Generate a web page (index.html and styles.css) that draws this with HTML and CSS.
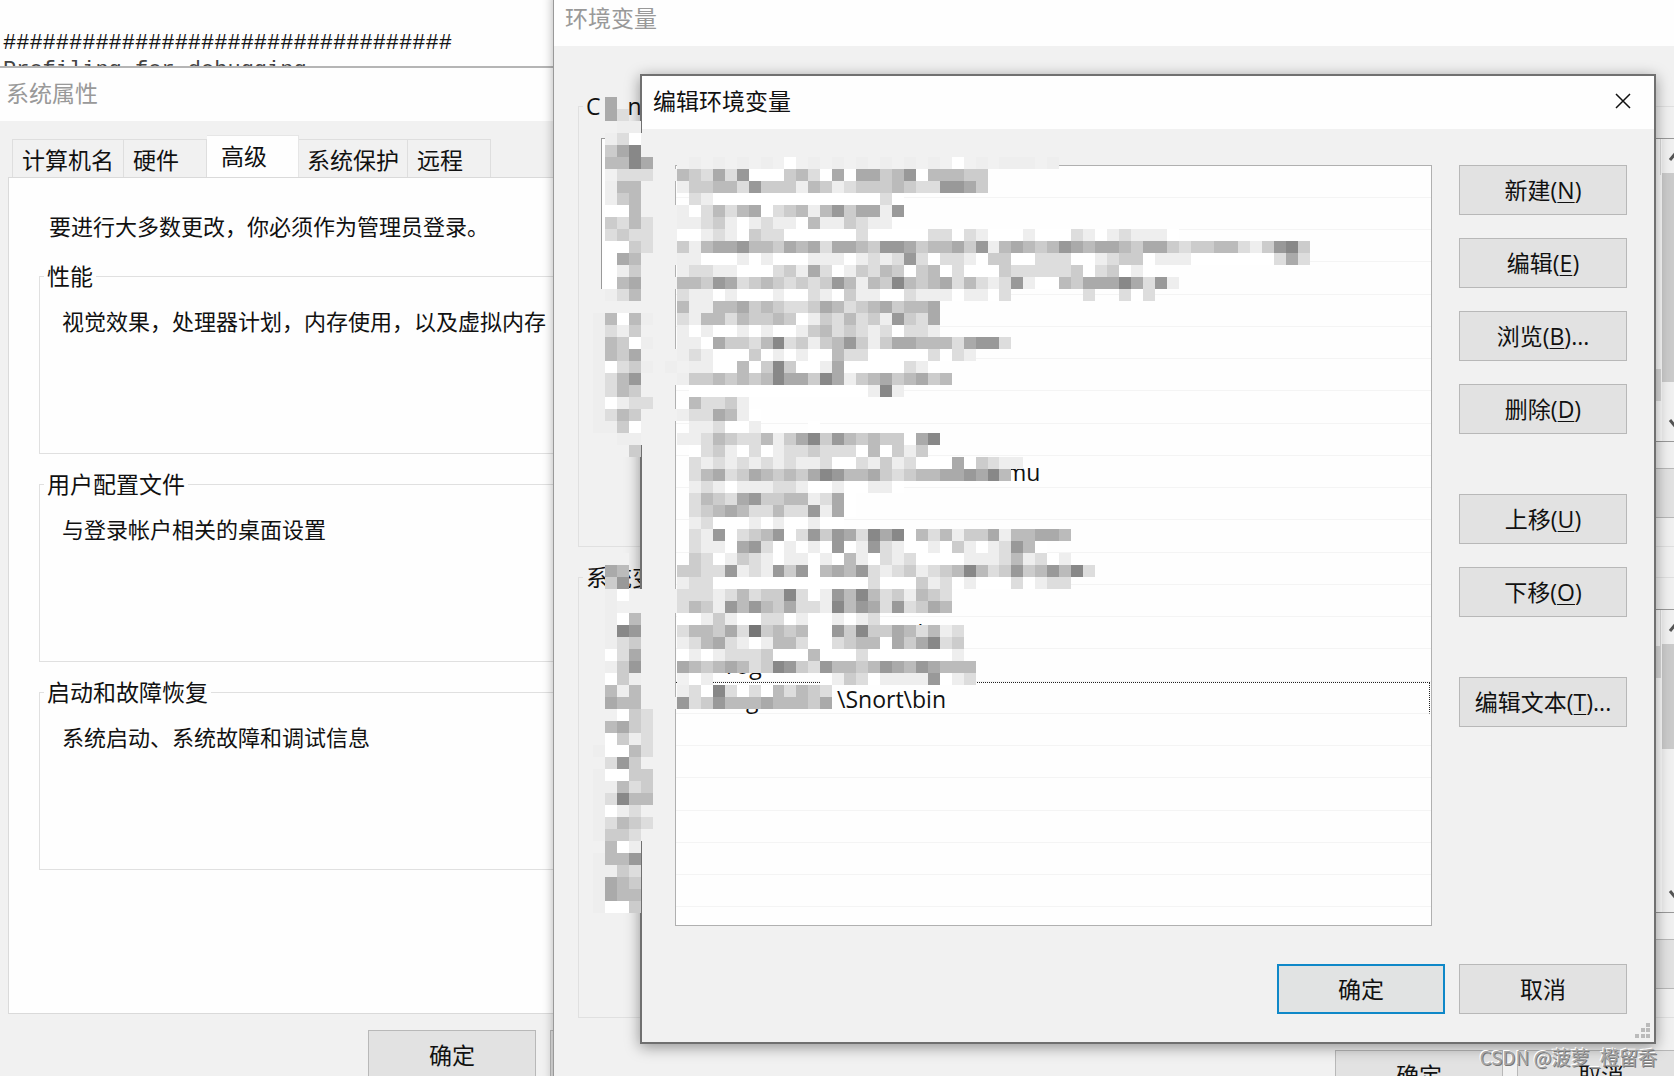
FILE: index.html
```html
<!DOCTYPE html>
<html lang="zh-CN">
<head>
    <meta charset="UTF-8">
    <meta name="viewport" content="width=device-width, initial-scale=1.0">
    <title>编辑环境变量</title>
    <link rel="stylesheet" href="styles.css">
</head>
<body>
    <main class="desktop">
        <!-- Terminal -->
        <pre class="console">##################################
<span>Profiling for debugging</span></pre>

        <!-- 系统属性 -->
        <section class="window system">
            <header class="title-bar inactive">系统属性</header>
            <div class="tabs" role="tablist">
                <button class="tab" role="tab">计算机名</button>
                <button class="tab" role="tab">硬件</button>
                <button class="tab active" role="tab" aria-selected="true">高级</button>
                <button class="tab" role="tab">系统保护</button>
                <button class="tab" role="tab">远程</button>
            </div>
            <div class="panel">
                <p class="notice">要进行大多数更改，你必须作为管理员登录。</p>
                <fieldset>
                    <legend>性能</legend>
                    <p>视觉效果，处理器计划，内存使用，以及虚拟内存</p>
                </fieldset>
                <fieldset>
                    <legend>用户配置文件</legend>
                    <p>与登录帐户相关的桌面设置</p>
                </fieldset>
                <fieldset>
                    <legend>启动和故障恢复</legend>
                    <p>系统启动、系统故障和调试信息</p>
                </fieldset>
            </div>
            <footer class="system-footer">
                <button class="btn">确定</button>
                <button class="btn" aria-label="取消"></button>
            </footer>
        </section>

        <!-- 环境变量 -->
        <section class="window variables">
            <header class="title-bar inactive">环境变量</header>
            <div class="variables-body">
                <fieldset>
                    <legend>C<span class="user-end">ng</span></legend>
                    <div class="var-list">
                        <div class="var-rows"><span class="header-cell"></span><span class="selected-row tall"></span></div>
                        <div class="scrollbar">
                            <svg viewBox="0 0 26 34"><path d="M8 21l5-6 5 6"/></svg>
                            <span class="thumb long"></span>
                            <svg viewBox="0 0 26 34"><path d="M8 13l5 6 5-6"/></svg>
                        </div>
                    </div>
                    <div class="var-actions"><button class="btn" aria-label="删除"></button></div>
                </fieldset>
                <fieldset>
                    <legend>系统变量</legend>
                    <div class="var-list">
                        <div class="var-rows"><span class="header-cell"></span><span class="selected-row"></span></div>
                        <div class="scrollbar">
                            <svg viewBox="0 0 26 34"><path d="M8 21l5-6 5 6"/></svg>
                            <span class="thumb"></span>
                            <svg viewBox="0 0 26 34"><path d="M8 13l5 6 5-6"/></svg>
                        </div>
                    </div>
                    <div class="var-actions"><button class="btn" aria-label="删除"></button></div>
                </fieldset>
                <footer class="variables-footer">
                    <button class="btn">确定</button>
                    <button class="btn">取消</button>
                </footer>
            </div>
        </section>

        <!-- 编辑环境变量 -->
        <section class="window editor">
            <header class="title-bar">
                <span>编辑环境变量</span>
                <button class="close" aria-label="关闭">
                    <svg viewBox="0 0 16 16"><path d="M1 1l14 14M15 1L1 15"/></svg>
                </button>
            </header>
            <div class="editor-body">
                <ul class="paths">
                    <li></li><li></li><li></li><li></li>
                    <li></li><li></li><li></li><li></li>
                    <li></li>
                    <li><span class="to-name">mu</span></li>
                    <li></li><li></li><li></li><li></li>
                    <li><span class="to-bin">%\bin</span></li>
                    <li><span class="to-folder">rog</span></li>
                    <li class="focused"><span class="to-g">g</span><span class="to-snort">\Snort\bin</span></li>
                    <li></li><li></li><li></li><li></li><li></li><li></li>
                </ul>
                <div class="actions">
                    <button class="btn">新建(<u>N</u>)</button>
                    <button class="btn">编辑(<u>E</u>)</button>
                    <button class="btn">浏览(<u>B</u>)...</button>
                    <button class="btn">删除(<u>D</u>)</button>
                    <button class="btn spaced">上移(<u>U</u>)</button>
                    <button class="btn">下移(<u>O</u>)</button>
                    <button class="btn spaced">编辑文本(<u>T</u>)...</button>
                </div>
            </div>
            <footer class="editor-footer">
                <button class="btn default">确定</button>
                <button class="btn">取消</button>
            </footer>
            <svg class="grip" viewBox="0 0 15 15">
                <path d="M11 0h4v4h-4zM6 5h4v4H6zM11 5h4v4h-4zM0 11h4v4H0zM6 11h4v4H6zM11 11h4v4h-4z"/>
            </svg>
        </section>

        <svg class="mosaic mosaic-names" id="mosaic-names" preserveAspectRatio="none"></svg>
        <svg class="mosaic mosaic-paths" id="mosaic-paths" preserveAspectRatio="none"></svg>

        <div class="watermark">CSDN @菠萝_橙留香</div>
    </main>
    <script src="script.js"></script>
</body>
</html>
```
FILE: styles.css
```css
* {
    box-sizing: border-box;
}

body {
    margin: 0;
    font-family: "Open Sans", "Noto Sans CJK SC", sans-serif;
    font-size: 23px;
    line-height: 30px;
    color: #111;
}

p {
    margin: 0;
}

button {
    font: inherit;
    color: inherit;
}

.desktop {
    position: relative;
    height: 100vh;
    overflow: hidden;
    background: #fefefe;
}

.console {
    margin: 0;
    padding: 30px 3px;
    font: 22px/27px "Liberation Mono", monospace;
}

.console span {
    color: #444;
}

/* Windows */
.window {
    position: absolute;
    display: flex;
    flex-direction: column;
    background: #f1f1f1;
}

.title-bar {
    display: flex;
    align-items: center;
    justify-content: space-between;
    flex: none;
    height: 53px;
    padding: 0 22px 4px 11px;
    background: #fefefe;
}

.title-bar.inactive {
    color: #999;
}

.btn {
    flex: none;
    width: 168px;
    height: 50px;
    padding: 0;
    background: #e2e2e2;
    border: 1px solid #b8b8b8;
    white-space: nowrap;
}

.btn.default {
    background: #e1e3e3;
    border: 2px solid #0f88c8;
}

u {
    text-decoration-thickness: 1px;
    text-underline-offset: 3px;
}

fieldset {
    margin: 0;
    padding: 0;
    border: 1px solid #e0e0e0;
    min-width: 0;
}

legend {
    margin-left: 4px;
    padding: 0 3px;
}

/* System properties */
.system {
    top: 66px;
    left: 0;
    bottom: -20px;
    width: 760px;
    border-top: 2px solid #b5b5b5;
}

.system .title-bar {
    padding-left: 6px;
}

.tabs {
    display: flex;
    align-items: flex-end;
    height: 56px;
    padding-left: 12px;
}

.tab {
    height: 38px;
    padding: 3px 9px 0;
    background: #f1f1f1;
    border: 1px solid #dedede;
    border-bottom: none;
    border-left: none;
    text-align: left;
}

.tab:first-child {
    border-left: 1px solid #dedede;
}

.tab:nth-child(2),
.tab:nth-child(5) {
    min-width: 83px;
}

.tab:nth-child(4) {
    padding: 3px 8px 0;
}

.tab.active {
    height: 42px;
    min-width: 92px;
    padding: 0 14px 2px;
    background: #fefefe;
    border-color: #e6e6e6;
}

.panel {
    height: 837px;
    margin-left: 8px;
    padding: 33px 30px 0;
    background: #fefefe;
    border: 1px solid #dadada;
}

.panel p {
    font-size: 22px;
}

.panel fieldset {
    height: 193px;
    margin-bottom: 15px;
}

.panel .notice {
    margin-bottom: 20px;
    padding-left: 10px;
}

.panel fieldset p {
    padding: 15px 22px;
    white-space: nowrap;
}

.system-footer {
    display: flex;
    gap: 14px;
    padding: 16px 0 0 368px;
}

/* Environment variables */
.variables {
    top: -7px;
    left: 553px;
    right: -62px;
    bottom: -60px;
    border-left: 1px solid #999;
    box-shadow: 0 0 10px rgba(0, 0, 0, 0.3);
}

.variables-body {
    padding: 45px 24px 0;
}

.variables fieldset {
    height: 456px;
    margin-bottom: 15px;
}

.user-end {
    padding-left: 27px;
}

.var-list {
    display: flex;
    height: 304px;
    margin: 17px 22px 0;
    background: #fefefe;
    border: 1px solid #999;
}

.var-rows {
    flex: 1;
    padding-right: 1px;
}

.header-cell {
    display: block;
    height: 36px;
    border-right: 1px solid #ddd;
}

.selected-row {
    display: block;
    height: 32px;
    background: #dcdcdc;
}

.selected-row.tall {
    margin-top: 194px;
}

.scrollbar {
    display: flex;
    flex-direction: column;
    justify-content: space-between;
    width: 26px;
    background: #f1f1f1;
}

.scrollbar svg {
    flex: none;
    width: 26px;
    height: 34px;
    fill: none;
    stroke: #555;
    stroke-width: 3;
}

.thumb {
    height: 105px;
    margin-bottom: auto;
    background: #cbcbcb;
}

.thumb.long {
    height: 209px;
}

.var-actions {
    display: flex;
    justify-content: flex-end;
    padding: 26px 22px 0;
}

.variables-footer {
    display: flex;
    justify-content: flex-end;
    gap: 14px;
    padding: 17px 27px 0 0;
}

/* Edit dialog */
.editor {
    top: 74px;
    left: 640px;
    right: 18px;
    bottom: 32px;
    border: 2px solid #707070;
    box-shadow: 0 3px 14px rgba(0, 0, 0, 0.4);
}

.close {
    width: 18px;
    height: 18px;
    padding: 1px;
    background: none;
    border: none;
}

.close svg {
    display: block;
    fill: none;
    stroke: #111;
    stroke-width: 1.5;
}

.editor-body {
    display: flex;
    gap: 27px;
    flex: 1;
    min-height: 0;
    padding: 36px 27px 0 33px;
}

.paths {
    flex: 1;
    margin: 0;
    padding: 0;
    overflow: hidden;
    list-style: none;
    background: #fefefe;
    border: 1px solid #b0b0b0;
}

.paths li {
    display: flex;
    height: 32px;
    line-height: 32px;
    border-bottom: 1px solid #f4f4f4;
}

.paths li:nth-child(4n) {
    height: 33px;
}

.paths .focused {
    margin-right: 1px;
    border-top: 1px dotted #222;
    border-right: 1px dotted #222;
}

.to-name {
    padding-left: 329px;
}

.to-bin {
    padding-left: 214px;
}

.to-folder {
    padding-left: 50px;
}

.to-g {
    width: 84px;
    padding-left: 70px;
}

.to-snort {
    padding-left: 77px;
}

.actions {
    display: flex;
    flex-direction: column;
    gap: 23px;
}

.spaced {
    margin-top: 37px;
}

.editor-footer {
    display: flex;
    justify-content: flex-end;
    gap: 14px;
    padding: 38px 27px 28px;
}

.grip {
    position: absolute;
    right: 4px;
    bottom: 4px;
    width: 15px;
    height: 15px;
    fill: #bbb;
}

/* Pixelated areas lying over the windows */
.mosaic {
    position: absolute;
    shape-rendering: crispEdges;
}

.mosaic-names {
    top: 97px;
    left: 593px;
    width: 60px;
    height: 816px;
}

.mosaic-paths {
    top: 157px;
    left: 665px;
    width: 645px;
    height: 552px;
}

.watermark {
    position: absolute;
    right: 17px;
    bottom: 4px;
    font: 19px/30px "Noto Sans CJK SC", sans-serif;
    color: #a5a5a5;
    text-shadow: 1px 1px 0 #777, -1px -1px 0 #fff;
}
```
FILE: script.js
```js
// One character per cell: hex digit = grey level, "-" = window grey, "." = empty
const names = [
    ".a...",
    ".ad..",
    ".-ee.",
    ".edf-",
    ".ca8-",
    ".bb8a",
    ".-ddd",
    ".ebb-",
    ".ecb-",
    ".ffb-",
    ".cdbd",
    ".dcdd",
    ".ffcd",
    ".fab-",
    ".fec-",
    ".fba-",
    "-edb-",
    "-----",
    "ebfbe",
    "edec-",
    "ebcfe",
    "ebca-",
    "efdce",
    "edb9-",
    "edbc-",
    "efedd",
    "edbc-",
    "eecf-",
    "--ee-",
    "---c.",
    ".....", ".....", ".....", ".....", ".....", ".....", ".....", ".....",
    "---..",
    ".ab..",
    ".c9..",
    ".ef--",
    "-e---",
    "-efb-",
    "-e89-",
    "-edc-",
    "-fda-",
    "-ec9-",
    "-fce-",
    "-beb-",
    "-abb-",
    "--fcd",
    "-bacd",
    "-fced",
    "effbd",
    "-d9c-",
    "effcc",
    "eebdc",
    "ed8bb",
    "efed-",
    "edbcd",
    "eccd-",
    "-bfe.",
    "ebb9.",
    "eecd.",
    "eabc.",
    "eabb.",
    "effc."
];

const paths = [
    ".-e-e-e-e-f-e-e-e-e-e-e-f-e-eee-e",
    "-bcdad9fffcbdfafaacb9fbbbcc",
    ".eccbbd9cccebcedcccbcdd99ac",
    "..deffffffffffffffdf",
    "-efdbdbafdcbeb9caae9",
    "-eedcefedeefbeecdee",
    "-ffedefcddffffffdfffffddfdefffefffdefedeeef",
    "-cebaa9bbcabadaabc99acbbac9ebabcb9abaabcaacdccbbdec98cb",
    "-eefffefefffeeefeded9dfddefccffdddffedccfeeefffffffdad",
    ".eddeefffdceadfecdbcfcbfdfffcdddddcfdcfef",
    "-bbc9adcbcdcdc9bebc8bcbadbded9effbcaaa8ad9e",
    ".deefefffeffdefceeffdeeefeefd......d..dfd",
    ".beebbacbcddcabdcbacbba",
    ".debbdbccbcfecdbdce9cda",
    ".efeffefeffecbdcdedfdde",
    ".eefaccdb8dcecb9cecaabbbda99d",
    "-edefffcfefeffbddfffffdfde",
    "e-eeffbfc8cffeafffffdef",
    "-eccbcbcb8aac8aecbacbacb",
    "..fffffffffffffffe8e",
    "..bddce",
    "-eddabef",
    "..eedffe....f",
    ".eedbcddbeca8c9bcbccfa8",
    "..fdcefdfeddcdddfbfcec",
    "..dededededeedffdecedfffafcdee",
    "..dbadcabcbca89bbacdcbbaa9a8b",
    "..edefeeeddeffeffeef",
    "..dbcda9ccbbedaf",
    "..dcbabddbdd9eaf",
    "..edfffefeffeff",
    "..de9fdcb9fd9c9ad8a8fbdbeccaebbaab",
    "..deefa9dfefef9fe9deffefcefed9bf",
    "..cdfecdefeefefbefdedffffeeedbedfe",
    ".ccdd9ede9c9fbab9dedcedcb8bdc9cb9b8d",
    ".eddfffffffffffffdfffcedfefffdfedd",
    "-dddedbdcc8dfe9b8bdcebcd",
    "-dbce9b9bcadde8b9ad9dcab",
    ".ffeceffddfeffefed",
    ".dbbcad7cbcbff9c8ccabdbed",
    ".edbadefebbdffdcbbfaca8dc",
    ".fefedddcfffbfffdfffffffe",
    ".abcbabdc89cd9bbcb9ab9abbb",
    ".-fe.........fecdfeeee9fed",
    ".edf8dfdfbdbcd",
    "-9dc9bbbabbbca"
];

function drawMosaic(id, rows, columns) {
    const svg = document.getElementById(id);
    svg.setAttribute("viewBox", `0 0 ${columns} ${rows.length}`);

    rows.forEach((row, y) => {
        [...row].slice(0, columns).forEach((cell, x) => {
            if (cell === ".") return;
            const rect = document.createElementNS("http://www.w3.org/2000/svg", "rect");
            rect.setAttribute("x", x);
            rect.setAttribute("y", y);
            rect.setAttribute("width", 1);
            rect.setAttribute("height", 1);
            rect.setAttribute("fill", cell === "-" ? "#f1f1f1" : `#${cell}${cell}${cell}`);
            svg.appendChild(rect);
        });
    });
}

drawMosaic("mosaic-names", names, 5);
drawMosaic("mosaic-paths", paths, 54);
```
